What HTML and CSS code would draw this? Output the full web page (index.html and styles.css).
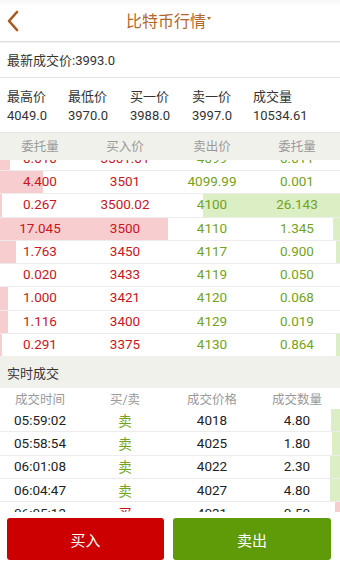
FILE: index.html
```html
<!DOCTYPE html>
<html lang="zh-CN">
<head>
<meta charset="utf-8">
<title>比特币行情</title>
<link rel="stylesheet" href="styles.css">
</head>
<body>
<div class="app">
  <header class="topbar">
    <div class="back">
      <svg width="14" height="22" viewBox="0 0 14 22"><path d="M11 2 L3 11 L11 20" fill="none" stroke="#a8581e" stroke-width="2.6" stroke-linecap="round" stroke-linejoin="round"/></svg>
    </div>
    <div class="title"><span>比特币行情</span><i class="caret"></i></div>
    <div></div>
  </header>

  <div class="latest">最新成交价:3993.0</div>

  <div class="stats">
    <div class="stat"><span>最高价</span><b>4049.0</b></div>
    <div class="stat"><span>最低价</span><b>3970.0</b></div>
    <div class="stat"><span>买一价</span><b>3988.0</b></div>
    <div class="stat"><span>卖一价</span><b>3997.0</b></div>
    <div class="stat"><span>成交量</span><b>10534.61</b></div>
  </div>

  <div class="grid4 book-head">
    <span>委托量</span><span>买入价</span><span>卖出价</span><span>委托量</span>
  </div>

  <div class="book">
    <div class="book-list">
      <div class="grid4 row" style="--b:10px;--s:0px"><span class="buy">0.010</span><span class="buy">3501.01</span><span class="sell">4099</span><span class="sell">0.011</span></div>
      <div class="grid4 row" style="--b:43px;--s:0px"><span class="buy">4.400</span><span class="buy">3501</span><span class="sell">4099.99</span><span class="sell">0.001</span></div>
      <div class="grid4 row" style="--b:2px;--s:137px"><span class="buy">0.267</span><span class="buy">3500.02</span><span class="sell">4100</span><span class="sell">26.143</span></div>
      <div class="grid4 row" style="--b:168px;--s:7px"><span class="buy">17.045</span><span class="buy">3500</span><span class="sell">4110</span><span class="sell">1.345</span></div>
      <div class="grid4 row" style="--b:16px;--s:4px"><span class="buy">1.763</span><span class="buy">3450</span><span class="sell">4117</span><span class="sell">0.900</span></div>
      <div class="grid4 row" style="--b:0px;--s:0px"><span class="buy">0.020</span><span class="buy">3433</span><span class="sell">4119</span><span class="sell">0.050</span></div>
      <div class="grid4 row" style="--b:8px;--s:0px"><span class="buy">1.000</span><span class="buy">3421</span><span class="sell">4120</span><span class="sell">0.068</span></div>
      <div class="grid4 row" style="--b:8px;--s:0px"><span class="buy">1.116</span><span class="buy">3400</span><span class="sell">4129</span><span class="sell">0.019</span></div>
      <div class="grid4 row" style="--b:2px;--s:4px"><span class="buy">0.291</span><span class="buy">3375</span><span class="sell">4130</span><span class="sell">0.864</span></div>
    </div>
  </div>

  <div class="section">实时成交</div>

  <div class="grid4 trade-head">
    <span>成交时间</span><span>买/卖</span><span>成交价格</span><span>成交数量</span>
  </div>

  <div class="trades">
    <div class="grid4 trow" style="--s:9px"><span>05:59:02</span><span class="sell">卖</span><span>4018</span><span>4.80</span></div>
    <div class="grid4 trow" style="--s:8px"><span>05:58:54</span><span class="sell">卖</span><span>4025</span><span>1.80</span></div>
    <div class="grid4 trow" style="--s:10px"><span>06:01:08</span><span class="sell">卖</span><span>4022</span><span>2.30</span></div>
    <div class="grid4 trow" style="--s:10px"><span>06:04:47</span><span class="sell">卖</span><span>4027</span><span>4.80</span></div>
    <div class="grid4 trow buyrow" style="--s:5px"><span>06:05:13</span><span class="buy">买</span><span>4031</span><span>0.50</span></div>
  </div>

  <footer class="actions">
    <button class="btn btn-buy">买入</button>
    <button class="btn btn-sell">卖出</button>
  </footer>
</div>
</body>
</html>
```
FILE: styles.css
```css
* { box-sizing: border-box; }
html, body { margin: 0; padding: 0; }
body {
  width: 340px;
  height: 570px;
  overflow: hidden;
  background: #fff;
  font-family: Roboto, "Noto Sans CJK SC", sans-serif;
  color: #222;
}
.app {
  display: flex;
  flex-direction: column;
  height: 570px;
}
.topbar {
  height: 42px;
  flex: none;
  display: grid;
  grid-template-columns: 40px 1fr 40px;
  align-items: center;
  border-bottom: 1px solid #dedede;
  background: linear-gradient(#f6f6f6, #fff 6px);
  box-shadow: 0 1px 1px rgba(0,0,0,0.04);
}
.back {
  display: flex;
  align-items: center;
  padding-left: 6px;
  padding-top: 1px;
}
.back svg { display: block; }
.title {
  display: flex;
  justify-content: center;
  align-items: center;
  gap: 1px;
  font-size: 16px;
  color: #b2682a;
  margin-left: -3px;
  padding-bottom: 1px;
}
.caret {
  display: block;
  width: 0; height: 0;
  border-left: 2.5px solid transparent;
  border-right: 2.5px solid transparent;
  border-top: 3px solid #b2682a;
  margin-top: -3px;
}
.latest {
  height: 36px;
  flex: none;
  display: flex;
  align-items: center;
  padding-left: 7px;
  padding-bottom: 1px;
  font-size: 13px;
  color: #333;
  border-bottom: 1px solid #e4e4e4;
}
.stats {
  height: 54px;
  flex: none;
  display: grid;
  grid-template-columns: 61px 62px 62px 61px 1fr;
  padding-left: 7px;
  padding-top: 1px;
  align-content: center;
}
.stat {
  display: flex;
  flex-direction: column;
  font-size: 13px;
  color: #333;
  line-height: 19px;
}
.stat b { font-weight: normal; }
.grid4 {
  display: grid;
  grid-template-columns: 80px 90px 84px 86px;
  align-items: center;
  text-align: center;
}
.book-head {
  height: 28px;
  flex: none;
  background: #f1f1ec;
  font-size: 12.5px;
  color: #9a9a9a;
  padding-bottom: 3px;
  border-top: 1px solid #e6e6e2;
}
.book {
  height: 196px;
  flex: none;
  overflow: hidden;
}
.book-list { margin-top: -12.25px; }
.row {
  height: 23.25px;
  font-size: 13.5px;
  padding-bottom: 2px;
  border-bottom: 1px solid #ececec;
  background: linear-gradient(to right,
    #f8cdd0 0, #f8cdd0 var(--b),
    #fff var(--b), #fff calc(100% - var(--s)),
    #dbeec4 calc(100% - var(--s)), #dbeec4 100%);
}
.buy { color: #c8161e; }
.sell { color: #74a21a; }
.section {
  height: 32px;
  flex: none;
  background: #f1f1ec;
  display: flex;
  align-items: center;
  padding-left: 7px;
  font-size: 13px;
  color: #333;
}
.trade-head {
  height: 21px;
  flex: none;
  font-size: 12.5px;
  color: #9a9a9a;
}
.trades {
  height: 103px;
  flex: none;
  overflow: hidden;
}
.trow {
  height: 23.3px;
  font-size: 13.5px;
  color: #222;
  padding-bottom: 1px;
  border-bottom: 1px solid #ececec;
  background: linear-gradient(to right,
    #fff 0, #fff calc(100% - var(--s)),
    #dbeec4 calc(100% - var(--s)), #dbeec4 100%);
}
.trow.buyrow {
  background: linear-gradient(to right,
    #fff 0, #fff calc(100% - var(--s)),
    #f8cdd0 calc(100% - var(--s)), #f8cdd0 100%);
}
.actions {
  flex: 1;
  display: grid;
  grid-template-columns: 157px 158px;
  gap: 9px;
  padding: 6px 9px 10px 7px;
  background: #fff;
}
.btn {
  height: 42px;
  border: none;
  border-radius: 3px;
  color: #fff;
  font-family: Roboto, "Noto Sans CJK SC", sans-serif;
  font-size: 15px;
  padding: 0;
}
.btn-buy { background: #cc0000; }
.btn-sell { background: #5f9a08; }
```
